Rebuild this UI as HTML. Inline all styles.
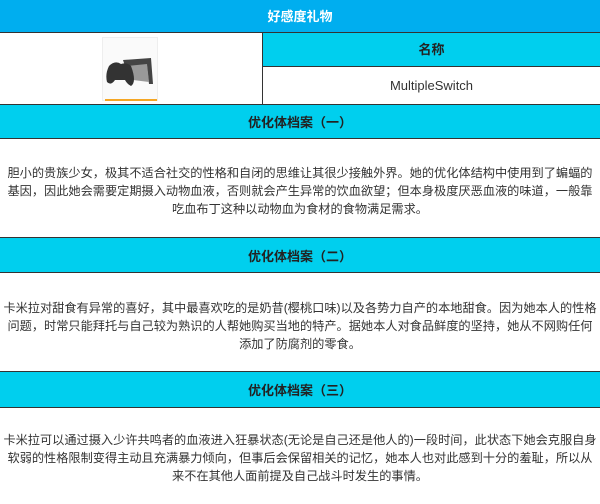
<!DOCTYPE html>
<html><head><meta charset="utf-8"><style>
*{margin:0;padding:0;box-sizing:border-box}
body{width:600px;height:504px;background:#fff;position:relative;overflow:hidden;font-family:"Liberation Sans","Noto Sans CJK SC",sans-serif;color:#333}
.a{position:absolute;left:0;width:600px;text-align:center}
.h{background:#00cfee;font-weight:bold;font-size:13px;color:#222;border-top:1px solid #333;border-bottom:1px solid #333;display:flex;align-items:center;justify-content:center}
.p{font-size:12.2px;line-height:18px;padding:0 3px;letter-spacing:0}
</style></head><body>
<div class="a" style="top:0;height:33px;background:#00aeef;color:#fff;font-weight:bold;font-size:13px;line-height:33px">好感度礼物</div>
<div class="a" style="top:32px;height:73px;border-top:1px solid #333;border-bottom:1px solid #333"></div>
<div style="position:absolute;left:262px;top:33px;width:1px;height:71px;background:#333"></div>
<div style="position:absolute;left:102px;top:37px;width:56px;height:64px;background:#fafafa;border:1px solid #eee">
<svg width="56" height="64" viewBox="0 0 56 64">
<path d="M20 22 L48 20 L50 46 L46 46 L44 28 L22 28Z" fill="#444"/>
<path d="M24 28 L44 26 L46 44 L30 42Z" fill="#999"/>
<path d="M6 28 Q12 22 18 26 Q24 24 28 28 Q34 44 28 48 Q24 46 22 42 L12 42 Q8 48 4 44 Q2 36 6 28Z" fill="#333"/>
<rect x="2" y="61" width="52" height="2" fill="#f5a623"/>
</svg></div>
<div style="position:absolute;left:263px;top:33px;width:337px;height:34px;background:#00cfee;border-bottom:1px solid #333;font-weight:bold;font-size:13px;line-height:34px;text-align:center;color:#222">名称</div>
<div style="position:absolute;left:263px;top:68px;width:337px;height:36px;font-size:13px;line-height:36px;text-align:center">MultipleSwitch</div>
<div class="a h" style="top:104px;height:35px">优化体档案（一）</div>
<div class="a p" style="top:164px">胆小的贵族少女，极其不适合社交的性格和自闭的思维让其很少接触外界。她的优化体结构中使用到了蝙蝠的基因，因此她会需要定期摄入动物血液，否则就会产生异常的饮血欲望；但本身极度厌恶血液的味道，一般靠吃血布丁这种以动物血为食材的食物满足需求。</div>
<div class="a h" style="top:237px;height:36px">优化体档案（二）</div>
<div class="a p" style="top:299px">卡米拉对甜食有异常的喜好，其中最喜欢吃的是奶昔(樱桃口味)以及各势力自产的本地甜食。因为她本人的性格问题，时常只能拜托与自己较为熟识的人帮她购买当地的特产。据她本人对食品鲜度的坚持，她从不网购任何添加了防腐剂的零食。</div>
<div class="a h" style="top:371px;height:37px">优化体档案（三）</div>
<div class="a p" style="top:431px">卡米拉可以通过摄入少许共鸣者的血液进入狂暴状态(无论是自己还是他人的)一段时间，此状态下她会克服自身软弱的性格限制变得主动且充满暴力倾向，但事后会保留相关的记忆，她本人也对此感到十分的羞耻，所以从来不在其他人面前提及自己战斗时发生的事情。</div>
</body></html>
